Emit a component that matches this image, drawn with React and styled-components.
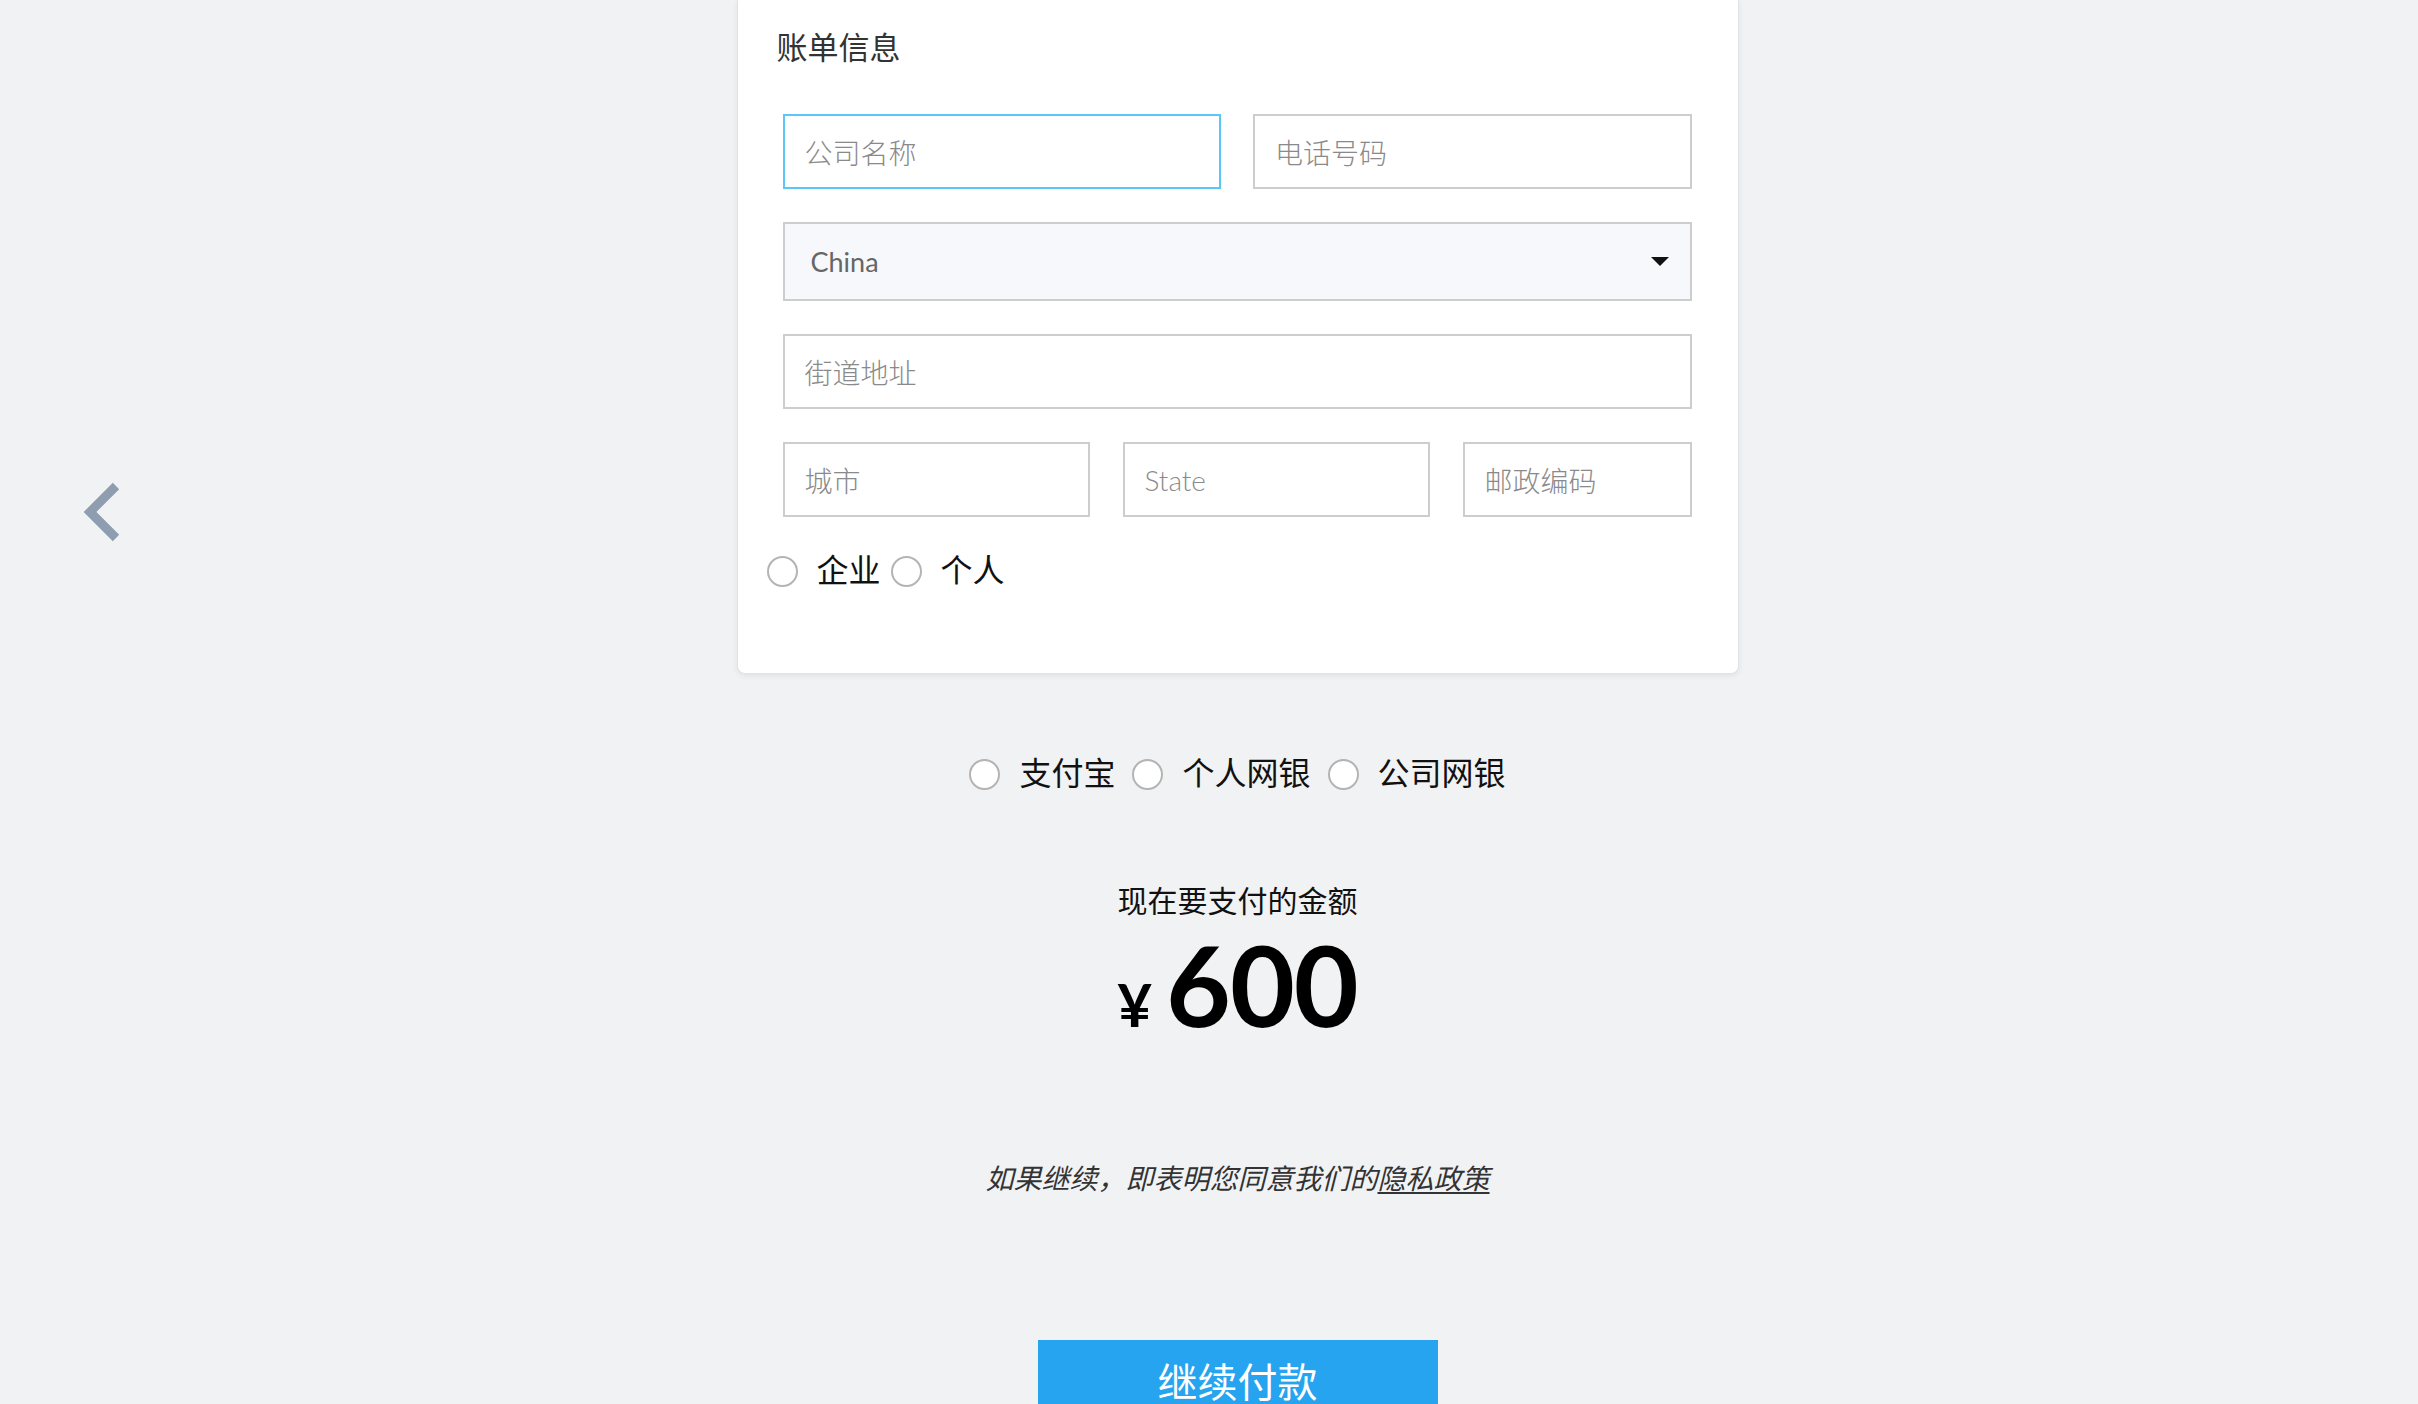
import React from "react";
import styled, { createGlobalStyle } from "styled-components";

const GlobalStyle = createGlobalStyle`
  html, body {
    margin: 0;
    padding: 0;
    background: #f1f2f4;
  }
  * {
    box-sizing: border-box;
  }
`;

const Page = styled.div`
  position: relative;
  min-height: 1404px;
  padding-left: 57px;
  display: flex;
  flex-direction: column;
  align-items: center;
  overflow: hidden;
  font-family: "Noto Sans CJK SC", sans-serif;
`;

const BackArrow = styled.button`
  position: absolute;
  left: 82px;
  top: 482px;
  width: 40px;
  height: 60px;
  padding: 0;
  border: none;
  background: transparent;
  cursor: pointer;
`;

const Card = styled.div`
  width: 1002px;
  background: #ffffff;
  border: 1px solid #e1e2e4;
  border-top: none;
  border-radius: 0 0 8px 8px;
  box-shadow: 0 2px 6px rgba(0, 0, 0, 0.07);
  padding: 26px 46px 82px 29px;
`;

const Title = styled.div`
  padding-left: 10px;
  font-size: 31px;
  line-height: 40px;
  color: #333;
`;

const Fields = styled.div`
  margin: 48px 0 0 16px;
  display: flex;
  flex-direction: column;
  gap: 33px;
`;

const Row = styled.div`
  display: grid;
  grid-template-columns: ${({ $cols }) => $cols};
  gap: ${({ $gap }) => $gap}px;
`;

const Input = styled.input`
  height: 75px;
  width: 100%;
  border: 2px solid ${({ $focused }) => ($focused ? "#5bc7f8" : "#cdcdcd")};
  background: #fff;
  padding: 0 20px;
  font-family: ${({ $latin }) =>
    $latin ? '"Lato", sans-serif' : '"Noto Sans CJK SC", sans-serif'};
  font-size: 28px;
  font-weight: 300;
  color: #333;
  outline: none;
  &::placeholder {
    color: #8a8a8a;
  }
`;

const SelectWrap = styled.div`
  position: relative;
`;

const Select = styled.select`
  appearance: none;
  width: 100%;
  height: 79px;
  border: 2px solid #cdcdcd;
  border-radius: 0;
  background: #f7f8fc;
  padding: 0 26px;
  font-family: "Lato", sans-serif;
  font-size: 27px;
  font-weight: 400;
  color: #666;
  outline: none;
`;

const Caret = styled.span`
  position: absolute;
  right: 23px;
  top: 35px;
  width: 0;
  height: 0;
  border-left: 9.5px solid transparent;
  border-right: 9.5px solid transparent;
  border-top: 9px solid #111;
  pointer-events: none;
`;

const RadioGroup = styled.div`
  display: flex;
  align-items: center;
  justify-content: ${({ $center }) => ($center ? "center" : "flex-start")};
  height: 40px;
  margin-top: ${({ $top }) => $top}px;
`;

const Option = styled.label`
  display: flex;
  align-items: center;
  margin-right: ${({ $space }) => $space}px;
  cursor: pointer;
  &:last-child {
    margin-right: 0;
  }
`;

const Radio = styled.input`
  appearance: none;
  width: 31px;
  height: 31px;
  margin: 0 19px 0 0;
  border: 2px solid #b4b4b4;
  border-radius: 50%;
  background: #fff;
`;

const OptionText = styled.span`
  font-family: "Liberation Serif", "Noto Sans CJK SC", serif;
  font-size: 32px;
  line-height: 40px;
  color: #111;
`;

const AmountLabel = styled.div`
  margin-top: 88px;
  font-family: "Liberation Serif", "Noto Sans CJK SC", serif;
  font-size: 30px;
  line-height: 40px;
  color: #111;
`;

const Amount = styled.div`
  margin-top: 6px;
  display: flex;
  align-items: baseline;
  font-family: "Lato", sans-serif;
  font-weight: 700;
  color: #000;
  line-height: 112px;
`;

const Currency = styled.span`
  font-size: 60px;
  margin-right: 14px;
`;

const Figure = styled.span`
  font-size: 112px;
  letter-spacing: -1px;
`;

const Terms = styled.p`
  margin: 100px 0 0;
  font-family: "Liberation Serif", "Noto Sans CJK SC", serif;
  font-style: italic;
  font-size: 28px;
  line-height: 40px;
  color: #333;
`;

const TermsLink = styled.a`
  color: inherit;
  text-decoration: underline;
  text-underline-offset: 3px;
`;

const PayButton = styled.button`
  margin-top: 140px;
  width: 400px;
  height: 80px;
  border: none;
  background: #26a4ef;
  color: #fff;
  font-family: "Noto Sans CJK SC", sans-serif;
  font-size: 40px;
  line-height: 1;
  cursor: pointer;
`;

const ChevronLeft = () => (
  <svg width="40" height="60" viewBox="0 0 40 60">
    <polyline
      points="34,4 8,30 34,56"
      fill="none"
      stroke="#8e9db0"
      strokeWidth="9"
      strokeLinejoin="miter"
      strokeLinecap="butt"
    />
  </svg>
);

const customerTypes = [
  { id: "company", label: "企业" },
  { id: "person", label: "个人" },
];

const payMethods = [
  { id: "alipay", label: "支付宝" },
  { id: "personal-bank", label: "个人网银" },
  { id: "company-bank", label: "公司网银" },
];

const App = () => {
  return (
    <Page>
      <GlobalStyle />
      <BackArrow aria-label="返回">
        <ChevronLeft />
      </BackArrow>

      <Card>
        <Title>账单信息</Title>
        <Fields>
          <Row $cols="1fr 1fr" $gap={32}>
            <Input $focused placeholder="公司名称" />
            <Input placeholder="电话号码" />
          </Row>
          <SelectWrap>
            <Select defaultValue="China">
              <option value="China">China</option>
            </Select>
            <Caret />
          </SelectWrap>
          <Input placeholder="街道地址" />
          <Row $cols="307px 307px 1fr" $gap={33}>
            <Input placeholder="城市" />
            <Input $latin placeholder="State" />
            <Input placeholder="邮政编码" />
          </Row>
        </Fields>
        <RadioGroup $top={34}>
          {customerTypes.map((t) => (
            <Option key={t.id} $space={10}>
              <Radio type="radio" name="customer" value={t.id} />
              <OptionText>{t.label}</OptionText>
            </Option>
          ))}
        </RadioGroup>
      </Card>

      <RadioGroup $center $top={80}>
        {payMethods.map((m) => (
          <Option key={m.id} $space={17}>
            <Radio type="radio" name="pay" value={m.id} />
            <OptionText>{m.label}</OptionText>
          </Option>
        ))}
      </RadioGroup>

      <AmountLabel>现在要支付的金额</AmountLabel>
      <Amount>
        <Currency>¥</Currency>
        <Figure>600</Figure>
      </Amount>

      <Terms>
        如果继续，即表明您同意我们的<TermsLink href="#">隐私政策</TermsLink>
      </Terms>

      <PayButton>继续付款</PayButton>
    </Page>
  );
};

export default App;
